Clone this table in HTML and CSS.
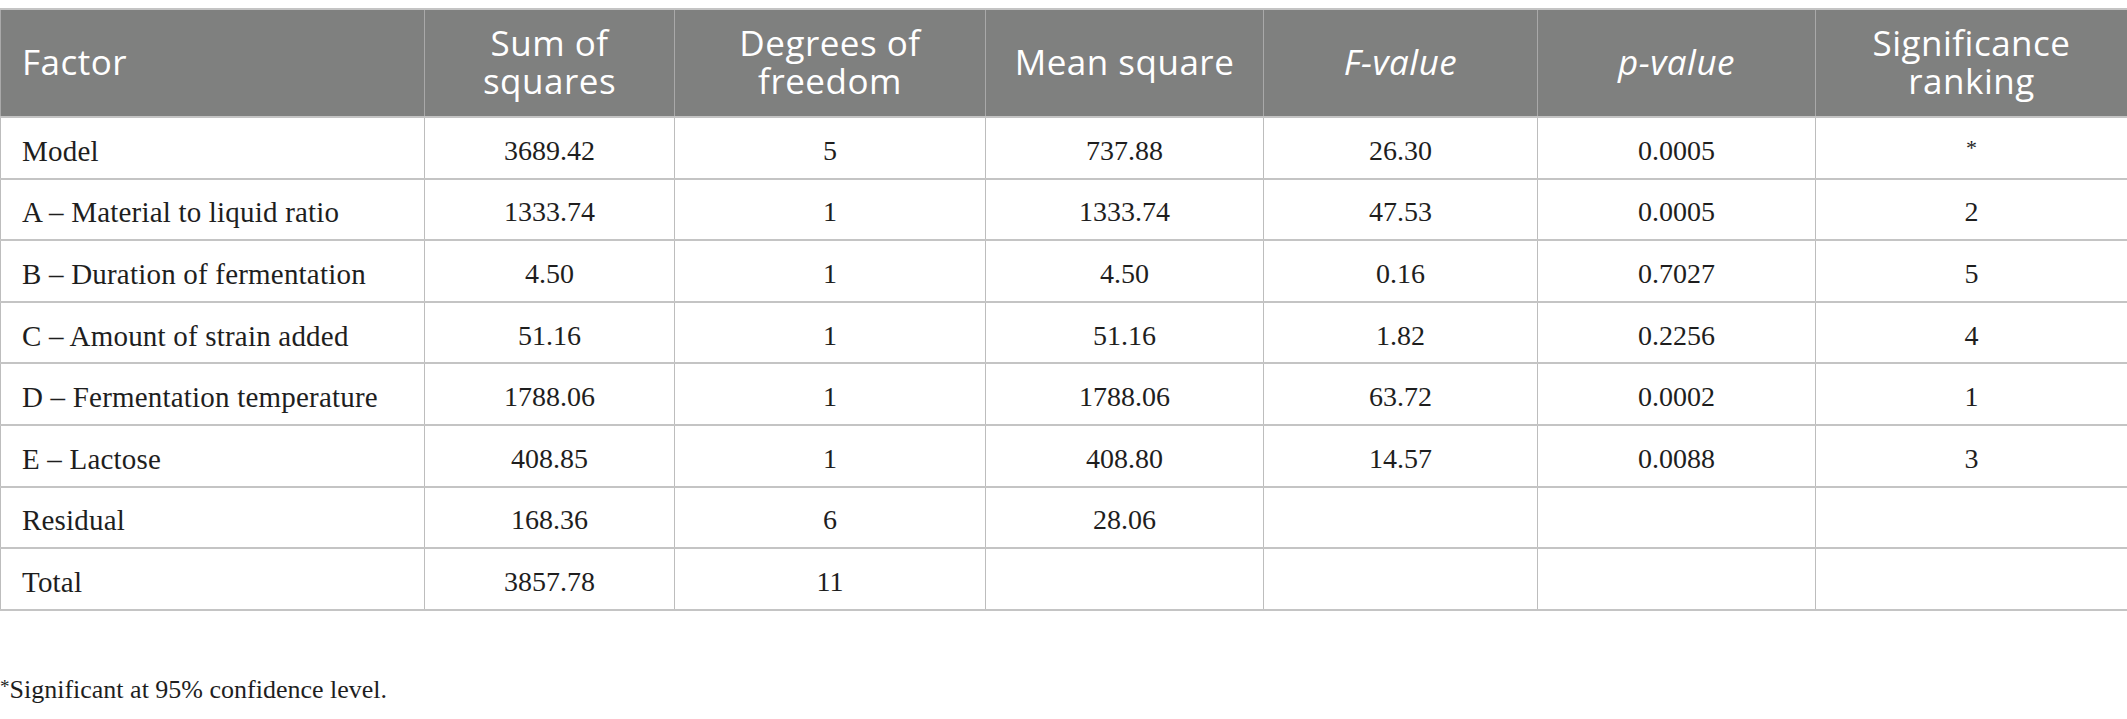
FILE: index.html
```html
<!DOCTYPE html>
<html lang="en">
<head>
<meta charset="utf-8">
<title>ANOVA table</title>
<link rel="stylesheet" href="styles.css">
</head>
<body>
<table class="anova">
  <colgroup>
    <col class="c1"><col class="c2"><col class="c3"><col class="c4"><col class="c5"><col class="c6"><col class="c7">
  </colgroup>
  <thead>
    <tr>
      <th class="left">Factor</th>
      <th>Sum of<br>squares</th>
      <th>Degrees of<br>freedom</th>
      <th>Mean square</th>
      <th><em>F-value</em></th>
      <th><em>p-value</em></th>
      <th>Significance<br>ranking</th>
    </tr>
  </thead>
  <tbody>
    <tr><td class="left">Model</td><td>3689.42</td><td>5</td><td>737.88</td><td>26.30</td><td>0.0005</td><td><span class="ast">*</span></td></tr>
    <tr><td class="left">A – Material to liquid ratio</td><td>1333.74</td><td>1</td><td>1333.74</td><td>47.53</td><td>0.0005</td><td>2</td></tr>
    <tr><td class="left">B – Duration of fermentation</td><td>4.50</td><td>1</td><td>4.50</td><td>0.16</td><td>0.7027</td><td>5</td></tr>
    <tr><td class="left">C – Amount of strain added</td><td>51.16</td><td>1</td><td>51.16</td><td>1.82</td><td>0.2256</td><td>4</td></tr>
    <tr><td class="left">D – Fermentation temperature</td><td>1788.06</td><td>1</td><td>1788.06</td><td>63.72</td><td>0.0002</td><td>1</td></tr>
    <tr><td class="left">E – Lactose</td><td>408.85</td><td>1</td><td>408.80</td><td>14.57</td><td>0.0088</td><td>3</td></tr>
    <tr><td class="left">Residual</td><td>168.36</td><td>6</td><td>28.06</td><td></td><td></td><td></td></tr>
    <tr><td class="left">Total</td><td>3857.78</td><td>11</td><td></td><td></td><td></td><td></td></tr>
  </tbody>
</table>
<p class="footnote"><span class="fn-ast">*</span>Significant at 95% confidence level.</p>
</body>
</html>
```

FILE: styles.css
```css
html, body {
  margin: 0;
  padding: 0;
  background: #ffffff;
}

body {
  padding-top: 8px;
  font-family: "Liberation Serif", "Times New Roman", serif;
  color: #1e1e1e;
}

.anova {
  width: 2127px;
  border-collapse: collapse;
  table-layout: fixed;
}

.c1 { width: 424px; }
.c2 { width: 250px; }
.c3 { width: 311px; }
.c4 { width: 278px; }
.c5 { width: 274px; }
.c6 { width: 278px; }
.c7 { width: 312px; }

.anova th {
  background: #7f807f;
  color: #ffffff;
  font-family: "Open Sans", "Noto Sans", sans-serif;
  font-weight: 400;
  font-size: 35px;
  line-height: 38px;
  letter-spacing: 0.5px;
  height: 108px;
  padding: 0 6px 2px;
  text-align: center;
  vertical-align: middle;
  border-top: 2px solid #c4c4c4;
  border-bottom: 2px solid #c4c4c4;
  border-left: 1px solid #a9a9a9;
  border-right: 1px solid #a9a9a9;
  box-sizing: border-box;
}

.anova th em {
  font-style: italic;
}

.anova td {
  font-size: 28px;
  line-height: 32px;
  height: 61.6px;
  padding: 6px 6px 0;
  text-align: center;
  vertical-align: middle;
  border-top: 2px solid #c4c4c4;
  border-bottom: 2px solid #c4c4c4;
  border-left: 1px solid #bdbdbd;
  border-right: 1px solid #bdbdbd;
  box-sizing: border-box;
}

.anova .left {
  text-align: left;
  padding-left: 21px;
}

.anova td.left {
  font-size: 29px;
  letter-spacing: 0.2px;
}

.ast {
  font-size: 22px;
  position: relative;
  top: -4px;
}

.footnote {
  margin: 61px 0 0;
  font-size: 26px;
  line-height: 30px;
  color: #1e1e1e;
}

.fn-ast {
  font-size: 19px;
  vertical-align: 5px;
}
```
